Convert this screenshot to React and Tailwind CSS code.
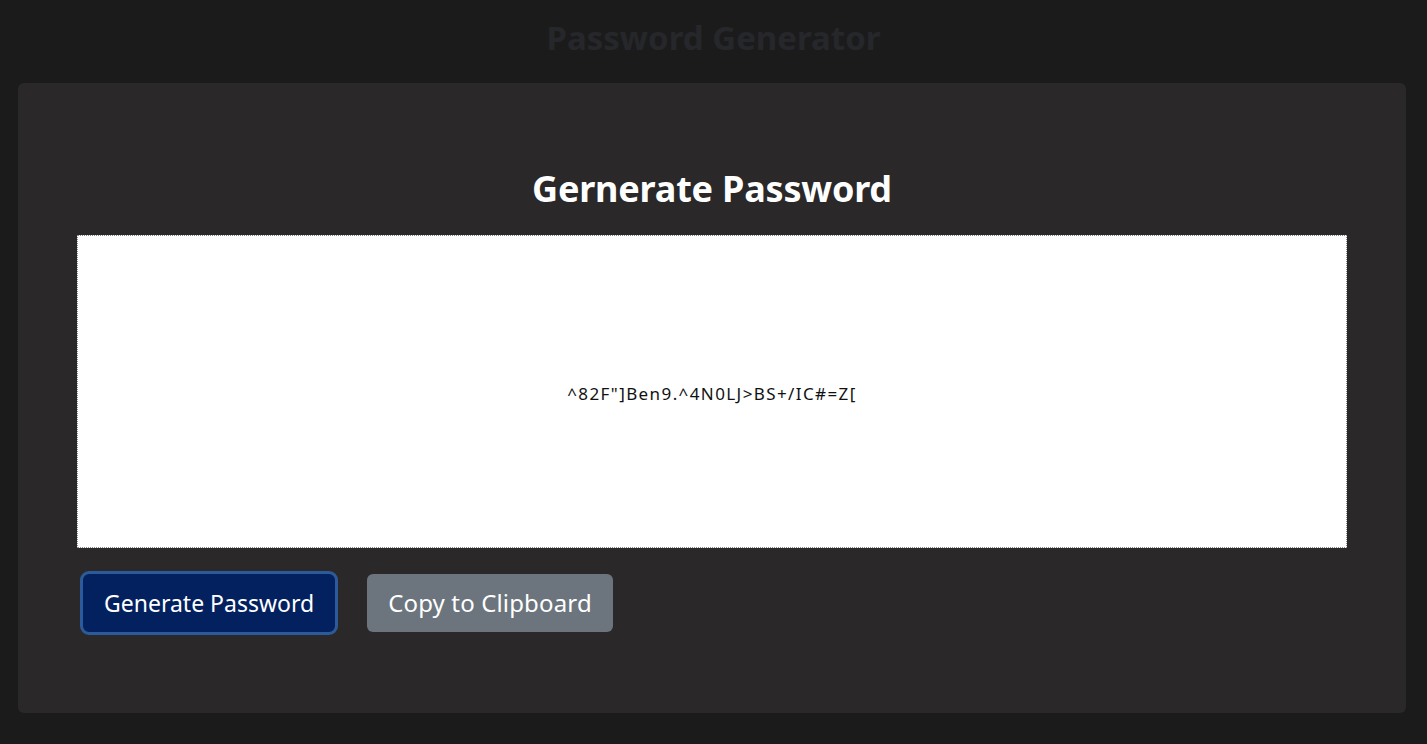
export default function App() {
  const font = { fontFamily: '"Noto Sans", "Open Sans", sans-serif' };
  return (
    <div className="min-h-[744px] w-full bg-[#1c1b1c] flex flex-col" style={font}>
      <header className="h-[83px] flex items-start justify-center pt-[18px]">
        <h1 className="text-[33px] leading-[40px] font-bold text-[#25272b]">Password Generator</h1>
      </header>
      <main className="ml-[18px] mr-[21px] h-[630px] rounded-[6px] bg-[#2a2829] px-[59px] pt-[86px] flex flex-col">
        <h2 className="text-center text-[36px] leading-[40px] font-bold text-white tracking-[-0.2px]">Gernerate Password</h2>
        <div className="mt-[26px] h-[313px] bg-white border border-dotted border-[#8a8a8a] flex items-center justify-center">
          <span className="text-[17px] leading-[24px] mt-[4px] text-[#111] tracking-[1.4px]">^82F"]Ben9.^4N0LJ&gt;BS+/IC#=Z[</span>
        </div>
        <div className="mt-[26px] ml-[6px] flex items-center gap-[32px]">
          <button className="h-[58px] px-[21px] rounded-[6px] bg-[#03205f] text-white text-[23px] outline outline-[3px] outline-[#2c5b9c]">
            Generate Password
          </button>
          <button className="h-[58px] px-[21px] rounded-[6px] bg-[#6c757d] text-white text-[24px] tracking-[0.15px]">
            Copy to Clipboard
          </button>
        </div>
      </main>
    </div>
  );
}
